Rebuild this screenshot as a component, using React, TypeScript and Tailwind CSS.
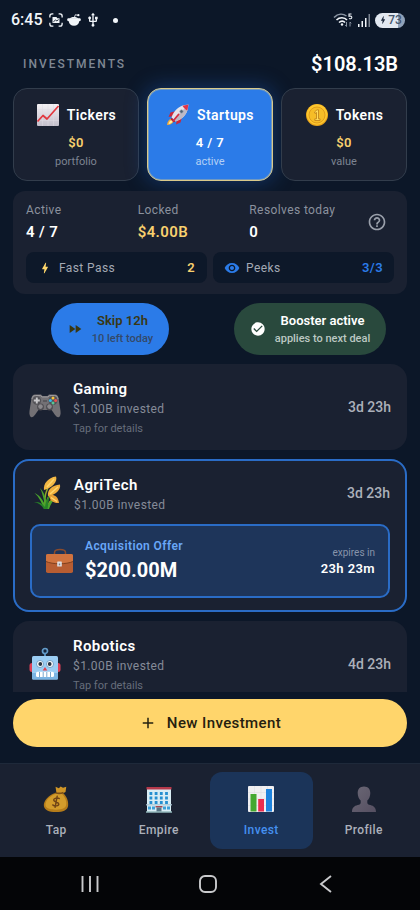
import type { ReactNode } from "react";
import { MdBolt, MdCheckCircle, MdFastForward, MdHelpOutline, MdOutlineAdd, MdUsb, MdVisibility } from "react-icons/md";
import { clsx } from "clsx";

function ChartUpIcon() {
  return (
    <svg viewBox="0 0 24 24" className="size-6 shrink-0">
      <defs>
        <linearGradient id="paper" x1="0" y1="0" x2="0" y2="1">
          <stop offset="0" stopColor="#f4f1f4" />
          <stop offset="1" stopColor="#c3bfcb" />
        </linearGradient>
      </defs>
      <rect x="1" y="1" width="22" height="22" rx="1" fill="url(#paper)" />
      <path d="M1 6.500h22M1 12h22M1 17.500h22M6.500 1v22M12 1v22M17.500 1v22" stroke="#dedbe3" strokeWidth=".5" />
      <path d="M1.500 18.500 7 12.500l4 3.500L22.500 3" fill="none" stroke="#e2383f" strokeWidth="1.700" strokeLinejoin="round" />
    </svg>
  );
}

function RocketIcon() {
  return (
    <svg viewBox="0 0 24 24" className="size-6 shrink-0">
      <path d="M5.500 15.500c-2.500.8-4.200 3-4.500 6.500 2.800.2 5.600-1.200 6.800-4z" fill="#f2a93b" />
      <path d="M5.500 17c-1.500.7-2.500 2-3 4 1.800-.2 3.200-1 4.200-2.500z" fill="#fff3a6" />
      <path d="M10 8 4.500 9.500 2.500 14l5-1zM16 14l-1.500 5.500-4.500 2 1-5z" fill="#c9283c" />
      <path d="M5.500 14.500C7.500 8 12.500 3 19 2l3.500-.5L22 5c-1 6.500-6 11.500-12.500 13.500z" fill="#e6e4ea" />
      <path d="M9.500 18.500C16 16.500 21 11.500 22 5l-1.500-1.500L7.500 16.500z" fill="#bdb9c6" />
      <path d="M16.500 2.700 22.500 1.500 21.300 7.500C19.500 6.700 17.500 4.700 16.500 2.700z" fill="#df3349" />
      <path d="m5.500 14.500 4 4-2 .8-2.800-2.800z" fill="#b7233b" />
      <circle cx="15.500" cy="8.500" r="1.700" fill="#4d6076" stroke="#a3adb9" strokeWidth=".7" />
      <path d="m12.500 11.500-5 6" stroke="#d62e43" strokeWidth="1.800" strokeLinecap="round" />
    </svg>
  );
}

function CoinIcon() {
  return (
    <svg viewBox="0 0 24 24" className="size-6 shrink-0">
      <circle cx="12" cy="12" r="11" fill="#e8a31b" />
      <circle cx="12" cy="11.500" r="10.300" fill="#fdc72e" />
      <circle cx="12" cy="12" r="8" fill="#f6bd27" stroke="#dc981b" strokeWidth=".9" />
      <path d="M9.500 9 12 6.800h1.500v9h1.500v1.700H9.800v-1.700h1.700V9.500l-1.500 1z" fill="#ffdc5c" stroke="#bd7d16" strokeWidth=".8" />
    </svg>
  );
}

function GamepadIcon() {
  return (
    <svg viewBox="0 2 32 32" className="size-8 shrink-0">
      <path d="M6 5.500h6l1.500 1.500h5L20 5.500h6c2 0 3 1.200 3.500 3.500l2 13c.5 3.500-.5 6-2 6.300-2.500.3-5-5-7-7.300H9.500c-2 2.300-4.500 7.600-7 7.300-1.500-.3-2.500-2.800-2-6.300l2-13C3 6.700 4 5.500 6 5.500z" fill="#737175" />
      <path d="M3 10c.5-2.500 1.500-3.500 3.500-3.500h5L13 8h6l1.500-1.500h5c2 0 3 1 3.500 3.500" fill="none" stroke="#9b999c" />
      <circle cx="7.800" cy="11.500" r="4.300" fill="#535257" />
      <path d="M7.800 8.500v6M4.800 11.500h6" stroke="#c8c7ca" strokeWidth="1.900" />
      <circle cx="24" cy="11.500" r="4.500" fill="#535257" />
      <circle cx="24" cy="8.900" r="1.500" fill="#f5c33b" />
      <circle cx="21.400" cy="11.500" r="1.500" fill="#37b6e8" />
      <circle cx="26.600" cy="11.500" r="1.500" fill="#ed4e50" />
      <circle cx="24" cy="14.100" r="1.500" fill="#55c795" />
      <path d="M14 12h4" stroke="#4b4a4e" strokeWidth="1.200" />
      <circle cx="11.500" cy="18" r="3.400" fill="#4c4b50" />
      <circle cx="20.500" cy="18" r="3.400" fill="#4c4b50" />
      <circle cx="11.500" cy="17.600" r="2.300" fill="#8b898d" />
      <circle cx="20.500" cy="17.600" r="2.300" fill="#8b898d" />
    </svg>
  );
}

function WheatIcon() {
  return (
    <svg viewBox="0 0 32 36" className="h-9 w-8 shrink-0">
      <path d="M15 33C14 24 16 14 21 8M16 33c0-8 2-12 8-17M17 33c1-5 3-8 8-9" fill="none" stroke="#93a828" strokeWidth="1.300" />
      <path d="M14 34C12 28 9 22 4.500 18c4 1.500 8 6 10.500 12C13.500 23 12 17 10 13c4 4 6.500 11 7 18 2-4 5-7 9-8-3.500 3-5.500 6.500-7 11z" fill="#4aa52c" />
      <path d="M14 34C11.500 30 8 27.500 4 27c5-.5 8.500 1.500 11 5 1-5 1.500-8 4.500-12-1 6-1 9-2 14z" fill="#278327" />
      <path d="M14 15c-1-6 4-12.500 12-13.500 2 5-4 11.500-12 13.500z" fill="#f3b843" />
      <path d="M18 21c-1-6 4-11 12-11.500 1 5-4 10.500-12 11.500z" fill="#f0af3c" />
      <path d="M19 21c3-2 9-1 10 7-5 .5-9-2-10-7z" fill="#e9a236" />
      <path d="m17 12 7-8M20 19l8-7M21 22.500l6 4" stroke="#ffd66d" strokeWidth="1.500" />
    </svg>
  );
}

function BriefcaseIcon() {
  return (
    <svg viewBox="0 0 30 30" className="size-[30px] shrink-0">
      <path d="M9.500 9V6.500C9.500 4.500 11 3.500 15 3.500s5.500 1 5.500 3V9" fill="none" stroke="#8b4b2c" strokeWidth="1.500" />
      <rect x="1" y="8" width="27" height="19" rx="1.800" fill="#b75d32" />
      <path d="M1 10c0-1.300.6-2 1.800-2h23.400c1.200 0 1.800.7 1.800 2v5.500C21.500 18.500 7.500 18.500 1 15.500z" fill="#d0733f" />
      <path d="M1 15.500c6.500 3 20.500 3 27 0" fill="none" stroke="#80401f" strokeWidth="1" />
      <rect x="12.200" y="15.500" width="4.600" height="5" rx=".6" fill="#dedde1" />
      <rect x="13.800" y="17.500" width="1.400" height="1.800" fill="#7e7c83" />
    </svg>
  );
}

function RobotIcon() {
  return (
    <svg viewBox="0 0 32 34" className="h-[34px] w-8 shrink-0">
      <path d="M16 5.500V10" stroke="#5793c2" strokeWidth="1.800" />
      <circle cx="16" cy="4" r="2.500" fill="#17263d" stroke="#639bc8" strokeWidth="1.700" />
      <rect x="0.500" y="16" width="5" height="9" rx="2.500" fill="#dd4057" />
      <rect x="26.500" y="16" width="5" height="9" rx="2.500" fill="#dd4057" />
      <rect x="3" y="9" width="26" height="23.500" rx="1.500" fill="#9bcdf3" />
      <path d="M3 26h26v5c0 1-.5 1.500-1.500 1.500h-23C3.500 32.500 3 32 3 31z" fill="#7bb4e3" />
      <circle cx="11" cy="17" r="3.500" fill="#fff" stroke="#5d8eb8" strokeWidth=".8" />
      <circle cx="21" cy="17" r="3.500" fill="#fff" stroke="#5d8eb8" strokeWidth=".8" />
      <circle cx="11.300" cy="17" r="1.900" fill="#283545" />
      <circle cx="20.700" cy="17" r="1.900" fill="#283545" />
      <path d="m16 20 2.300 3.500h-4.600z" fill="#e43f4e" />
      <rect x="7" y="24.800" width="18" height="5.200" rx="1.500" fill="#fff" />
      <path d="M10.500 25v5M14.200 25v5M17.800 25v5M21.500 25v5" stroke="#6d9fc8" strokeWidth=".9" />
    </svg>
  );
}

function MoneyBagIcon() {
  return (
    <svg viewBox="0 0 30 30" className="size-7">
      <path d="M15.500 8.500 14.500 2l3.500 1.500L20 1.500l2.500 1.500 3.500-1-.8 5.500-3.700 2z" fill="#cf9527" />
      <path d="M14.500 8.500h8c4 3.500 6 8.500 5.500 13.500-.4 5-5 7-13 7S2.500 26.500 2 22.500c-.6-6 5.500-12 12.500-14z" fill="#b57c1a" />
      <path d="M15 9.500h6c3.500 3 5.500 7.500 5 11.500-.5 4-4.500 5.500-11 5.500S4 25 3.700 21.500C3.500 16.500 9 11.500 15 9.500z" fill="#d39c2b" />
      <path d="M14.500 8.300q4 1.500 8.500-.3" fill="none" stroke="#7b4f18" strokeWidth="1.700" />
      <path d="M18.500 14.500c-1.500-1.200-6-.6-6 1.700 0 2.500 5.500 1.500 5.500 4.200 0 2.300-4.500 2.600-6.500.9M16.300 12 14 24" fill="none" stroke="#704416" strokeWidth="1.500" strokeLinecap="round" />
    </svg>
  );
}

function BuildingIcon() {
  return (
    <svg viewBox="1 1 28 28" className="size-7">
      <rect x="3" y="4" width="24" height="24" fill="#d9edf4" />
      <rect x="2.500" y="3" width="25" height="2.500" fill="#b5394b" />
      <path
        d="M5.500 9.500h2.800M10.700 9.500h2.800M15.900 9.500h2.800M21.100 9.500h2.800M5.500 14h2.800M10.700 14h2.800M15.900 14h2.800M21.100 14h2.800M5.500 18.500h2.800M10.700 18.500h2.800M15.900 18.500h2.800M21.100 18.500h2.800"
        stroke="#258fd0"
        strokeWidth="2.800"
      />
      <path d="M2 20.800h26" stroke="#a9c6d4" strokeWidth="1.200" />
      <path d="M4 24h3M8 24h3M19 24h3M23 24h3" stroke="#3ca0d8" strokeWidth="3" />
      <path d="M11.500 22h7v1.500h-7z" fill="#a94851" />
      <path d="M12.500 23.500h5V28h-5z" fill="#587584" />
      <path d="M2 28h26" stroke="#93b9bd" strokeWidth="1.500" />
    </svg>
  );
}

function BarChartIcon() {
  return (
    <svg viewBox="1 1 28 28" className="size-7">
      <rect x="2" y="2" width="26" height="26" rx="1" fill="#f0eff2" />
      <path d="M2 8.500h26M2 15h26M2 21.500h26M8.500 2v26M15 2v26M21.500 2v26" stroke="#dedde3" strokeWidth=".6" />
      <rect x="4.500" y="10" width="6" height="17.500" fill="#45a831" />
      <rect x="12.200" y="15" width="5.800" height="12.500" fill="#eb2d4e" />
      <rect x="20" y="5" width="6" height="22.500" fill="#1e83de" />
    </svg>
  );
}

function ProfileIcon() {
  return (
    <svg viewBox="1 1 28 28" className="size-7">
      <defs>
        <linearGradient id="bust" x1="0" y1="0" x2="1" y2="1">
          <stop offset="0" stopColor="#6b6775" />
          <stop offset="1" stopColor="#554f61" />
        </linearGradient>
      </defs>
      <path d="M15 2.500c4.200 0 6.300 2.800 6.300 6.500 0 3.300-1.300 6-3 7.500v2.200c0 1.300 1 1.800 3 2.400 3.500 1 5.500 2.400 5.700 6.900H3c.2-4.500 2.200-5.900 5.700-6.900 2-.6 3-1.100 3-2.400v-2.200c-1.700-1.500-3-4.200-3-7.500C8.700 5.300 10.800 2.500 15 2.500z" fill="url(#bust)" />
    </svg>
  );
}

function StatusBar() {
  return (
    <div className="flex h-10 shrink-0 items-center justify-between pr-[15px] pl-[11px] tracking-normal text-slate-100">
      <div className="flex items-center">
        <span className="text-base font-medium">6:45</span>
        <svg viewBox="0 0 16 16" className="ml-1.5 size-3.5" fill="none" stroke="currentColor" strokeWidth="1.500">
          <path d="M1 5V3.500C1 2 2 1 3.500 1H5M11 1h1.500C14 1 15 2 15 3.500V5M15 11v1.500c0 1.500-1 2.500-2.500 2.500H11M5 15H3.500C2 15 1 14 1 12.500V11" />
          <path d="M4 4.500h4.500L9.500 6H12v5.500H4z" fill="currentColor" stroke="none" />
          <path d="m5 10 2.500-2 1.500 1 2-1.500" stroke="#0c1728" strokeWidth="1" />
        </svg>
        <svg viewBox="0 0 16 16" className="ml-1 size-3.5" fill="currentColor">
          <path d="M1 6h14c1.200 1 1.300 3-1 3.300C13.500 12.500 11.500 14.500 8 14.500S2.500 12.500 2 9.300C-.3 9-.2 7 1 6z" />
          <path d="M3 6.500c1-2.500 9-2.500 10 0z" />
          <path d="m8.500 5 1-3 3 .6" fill="none" stroke="currentColor" />
          <circle cx="13" cy="2.500" r="1.300" />
        </svg>
        <MdUsb className="ml-1 size-4" />
        <span className="ml-3 size-[5px] rounded-full bg-slate-100" />
      </div>
      <div className="flex items-center">
        <svg viewBox="0 0 20 16" className="h-4 w-5" fill="none" stroke="currentColor">
          <path d="M1 5.500C5 1.500 10 1.500 13.500 4" stroke="#8b95a3" strokeWidth="1.500" />
          <path d="M3.500 8C6.500 5 11.500 5 14 8M6 10.500c2-1.800 4.500-1.800 6 0" strokeWidth="1.600" />
          <circle cx="9" cy="12.500" r="1.200" fill="currentColor" stroke="none" />
          <path d="M18.500 2H16v2.300c2-.5 2.800 0 2.800 1.200 0 1.300-1.500 1.500-2.800.9" strokeWidth="1.100" />
          <path d="M13.500 10v4.500l-1.300-1.300M17 14.500V10l1.300 1.300" stroke="#8b95a3" />
        </svg>
        <svg viewBox="0 0 14 14" className="ml-1 size-3.5" fill="currentColor">
          <path d="M1 11h1.500v3H1zM4.500 8H6v6H4.500zM8 5h1.500v9H8z" />
          <path d="M11.500 1H13v13h-1.500z" fill="#7b8491" />
        </svg>
        <span className="ml-1 flex h-[15px] w-[30px] items-center justify-center rounded-full bg-linear-to-r from-slate-200 from-75% to-slate-400 to-75% text-xs leading-none font-medium text-slate-600">
          <MdBolt className="size-2.5 text-slate-800" />
          73
        </span>
      </div>
    </div>
  );
}

type CategoryTabProps = { icon: ReactNode; title: string; value: string; caption: string; active?: boolean };

function CategoryTab({ icon, title, value, caption, active }: CategoryTabProps) {
  return (
    <button
      type="button"
      aria-pressed={!!active}
      className={clsx(
        "flex flex-1 flex-col items-center rounded-[14px] border py-2.5",
        active
          ? "border-[#d9c98a] bg-[#2b7be8] shadow-[0_0_20px_2px_rgba(30,100,210,0.35)] ring-1 ring-[#d9c98a]/40 ring-inset"
          : "border-[#323d4c] bg-[#1a2131]",
      )}
    >
      <span className="flex h-8 items-center gap-[7px] text-sm font-semibold text-white">
        {icon}
        {title}
      </span>
      <span className={clsx("mt-[3px] text-[13px] leading-[18px] font-semibold", active ? "text-white" : "text-[#f8d06e]")}>
        {value}
      </span>
      <span className={clsx("mt-0.5 text-[11px] leading-4 tracking-normal", active ? "text-[#b4d0f5]" : "text-[#7d8492]")}>
        {caption}
      </span>
    </button>
  );
}

function Stat({ label, value, gold }: { label: string; value: string; gold?: boolean }) {
  return (
    <div>
      <dt className="text-xs leading-4 text-[#8b919e]">{label}</dt>
      <dd className={clsx("mt-1 text-[15px] leading-5 font-semibold", gold ? "text-[#f8d06e]" : "text-white")}>{value}</dd>
    </div>
  );
}

function SummaryPanel() {
  return (
    <section className="mx-[13px] mt-2.5 rounded-xl bg-[#1a2131] px-[13px] py-[11px]">
      <div className="flex items-center">
        <dl className="grid flex-1 grid-cols-3">
          <Stat label="Active" value="4 / 7" />
          <Stat label="Locked" value="$4.00B" gold />
          <Stat label="Resolves today" value="0" />
        </dl>
        <button type="button" aria-label="Help" className="mr-[7px] ml-1.5 text-[#9aa0ab]">
          <MdHelpOutline className="size-5" />
        </button>
      </div>
      <div className="mt-2.5 grid grid-cols-2 gap-1.5 text-xs">
        <div className="flex h-[31px] items-center rounded-lg bg-[#0d1829] px-3">
          <MdBolt className="size-3.5 text-[#ffd76b]" />
          <span className="ml-[7px] flex-1 text-[#a3a9b4]">Fast Pass</span>
          <span className="text-[13px] font-semibold text-[#f8d06e]">2</span>
        </div>
        <div className="flex h-[31px] items-center rounded-lg bg-[#0d1829] px-[11px]">
          <MdVisibility className="size-4 text-[#2b7be8]" />
          <span className="ml-1.5 flex-1 text-[#a3a9b4]">Peeks</span>
          <span className="text-[13px] font-semibold text-[#2b7be8]">3/3</span>
        </div>
      </div>
    </section>
  );
}

function BoostRow() {
  return (
    <div className="mx-[13px] mt-[9px] grid grid-cols-2 gap-1.5">
      <button type="button" className="flex h-[52px] items-center gap-[9px] justify-self-center rounded-full bg-[#2b7be8] px-4 text-[#393714]">
        <MdFastForward className="size-4" />
        <span className="flex flex-col items-center">
          <span className="text-[13px] leading-5 font-semibold tracking-normal">Skip 12h</span>
          <span className="text-[11px] leading-4 font-medium tracking-normal text-[#344969]">10 left today</span>
        </span>
      </button>
      <button type="button" className="flex h-[52px] items-center gap-[9px] justify-self-center rounded-full bg-[#29493d] px-4 text-white">
        <MdCheckCircle className="size-4" />
        <span className="flex flex-col items-center">
          <span className="text-[13px] leading-5 font-semibold tracking-normal">Booster active</span>
          <span className="text-[11px] leading-4 font-medium tracking-normal text-[#bcc8c3]">applies to next deal</span>
        </span>
      </button>
    </div>
  );
}

type DealProps = { icon: ReactNode; name: string; invested: string; time: string; hint?: string };

function DealSummary({ icon, name, invested, time, hint }: DealProps) {
  return (
    <div className="flex items-center gap-3">
      {icon}
      <div className="flex-1">
        <h2 className="text-[15px] leading-6 font-semibold text-white">{name}</h2>
        <p className="text-xs leading-4 text-[#858b98]">{invested}</p>
        {hint && <p className="mt-1 text-[11px] leading-4 tracking-normal text-[#666d7b]">{hint}</p>}
      </div>
      <span className="text-sm font-medium tracking-normal text-[#abb0ba]">{time}</span>
    </div>
  );
}

function DealCard(props: DealProps) {
  return (
    <article className="rounded-2xl bg-[#1a2131] px-4 py-[13px]">
      <DealSummary {...props} />
    </article>
  );
}

function OfferCard() {
  return (
    <article className="rounded-2xl border-2 border-[#2a6cc6] bg-[#1a2131] px-[15px] py-3">
      <DealSummary icon={<WheatIcon />} name="AgriTech" invested="$1.00B invested" time="3d 23h" />
      <div className="mt-[11px] flex items-center gap-2.5 rounded-[10px] border-2 border-[#2a6cc6] bg-[#1e355a] px-[13px] py-3">
        <BriefcaseIcon />
        <div className="flex-1">
          <p className="text-xs leading-4 font-semibold text-[#69a7f8]">Acquisition Offer</p>
          <p className="mt-0.5 text-xl leading-7 font-bold tracking-normal text-white">$200.00M</p>
        </div>
        <div className="text-right">
          <p className="text-[10px] leading-4 tracking-normal text-[#8794aa]">expires in</p>
          <p className="text-[13px] leading-4 font-semibold text-white">23h 23m</p>
        </div>
      </div>
    </article>
  );
}

const navItems = [
  { label: "Tap", icon: <MoneyBagIcon /> },
  { label: "Empire", icon: <BuildingIcon /> },
  { label: "Invest", icon: <BarChartIcon />, active: true },
  { label: "Profile", icon: <ProfileIcon /> },
];

function BottomNav() {
  return (
    <nav className="mt-4 grid shrink-0 grid-cols-4 border-t border-[#1e293a] bg-[#1a2131] px-[5px] py-2">
      {navItems.map((item) => (
        <a
          key={item.label}
          href={`#${item.label.toLowerCase()}`}
          aria-current={item.active ? "page" : undefined}
          className={clsx(
            "flex h-[77px] flex-col items-center justify-center gap-[9px] rounded-xl pt-0.5 text-xs leading-4 font-medium",
            item.active ? "bg-[#1b3459] text-[#4590f0]" : "text-[#abb0ba]",
          )}
        >
          {item.icon}
          {item.label}
        </a>
      ))}
    </nav>
  );
}

function SystemBar() {
  return (
    <div className="grid h-[53px] shrink-0 grid-cols-3 place-items-center bg-[#040507] pr-[35px] pl-[31px] text-[#c9cacc]">
      <button type="button" aria-label="Recent apps">
        <svg viewBox="0 0 20 20" className="size-5" stroke="currentColor" strokeWidth="1.900">
          <path d="M2.500 2v16M10 2v16M17.500 2v16" />
        </svg>
      </button>
      <button type="button" aria-label="Home">
        <svg viewBox="0 0 20 20" className="size-5" fill="none" stroke="currentColor" strokeWidth="1.900">
          <rect x="2" y="2" width="16" height="16" rx="5" />
        </svg>
      </button>
      <button type="button" aria-label="Back">
        <svg viewBox="0 0 20 20" className="size-5" fill="none" stroke="currentColor" strokeWidth="1.900">
          <path d="M15 2 5 10l10 8" />
        </svg>
      </button>
    </div>
  );
}

export default function App() {
  return (
    <div className="flex h-screen flex-col overflow-hidden bg-[#0c1728] font-[Roboto,sans-serif] tracking-wide">
      <StatusBar />
      <header className="flex h-12 shrink-0 items-center justify-between pr-[22px] pl-[23px]">
        <h1 className="text-xs font-medium tracking-[2px] text-[#7f8793]">INVESTMENTS</h1>
        <span className="text-xl font-semibold tracking-normal text-white">$108.13B</span>
      </header>
      <main className="flex min-h-0 flex-1 flex-col">
        <div className="flex gap-2 px-[13px]">
          <CategoryTab icon={<ChartUpIcon />} title="Tickers" value="$0" caption="portfolio" />
          <CategoryTab icon={<RocketIcon />} title="Startups" value="4 / 7" caption="active" active />
          <CategoryTab icon={<CoinIcon />} title="Tokens" value="$0" caption="value" />
        </div>
        <SummaryPanel />
        <BoostRow />
        <div className="mx-[13px] mt-[9px] min-h-0 flex-1 space-y-[9px] overflow-y-auto [scrollbar-width:none]">
          <DealCard icon={<GamepadIcon />} name="Gaming" invested="$1.00B invested" time="3d 23h" hint="Tap for details" />
          <OfferCard />
          <DealCard icon={<RobotIcon />} name="Robotics" invested="$1.00B invested" time="4d 23h" hint="Tap for details" />
        </div>
        <button
          type="button"
          className="mx-[13px] mt-[7px] flex h-12 shrink-0 items-center justify-center gap-2.5 rounded-full bg-[#ffd56b] text-[15px] font-medium text-[#25200f]"
        >
          <MdOutlineAdd className="size-[18px]" />
          New Investment
        </button>
      </main>
      <BottomNav />
      <SystemBar />
    </div>
  );
}
